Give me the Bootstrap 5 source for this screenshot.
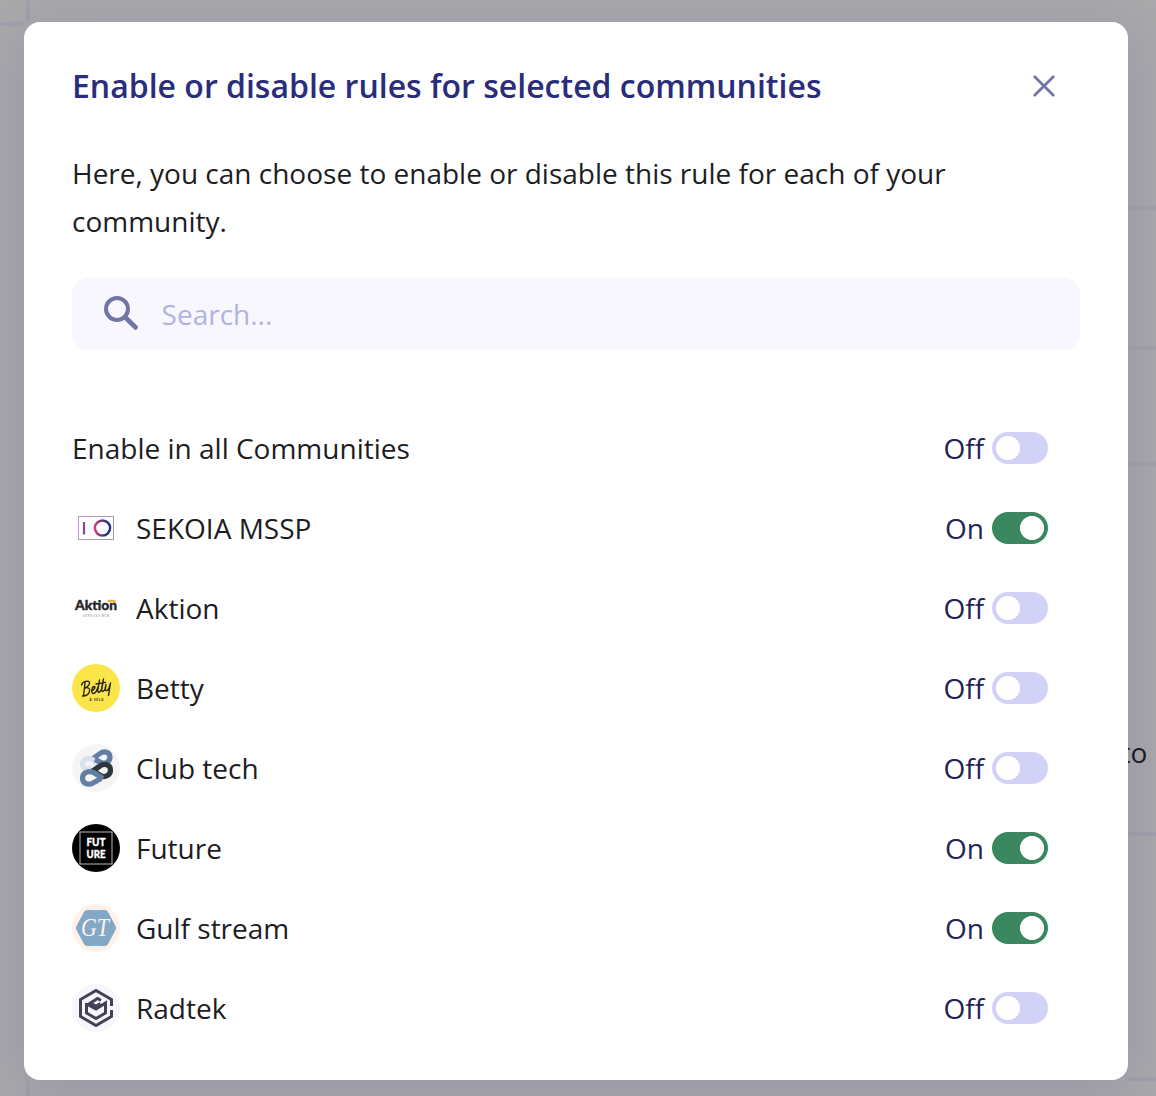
<!DOCTYPE html>
<html lang="en">
<head>
<meta charset="utf-8">
<meta name="viewport" content="width=device-width, initial-scale=1">
<title>Communities</title>
<link href="https://cdn.jsdelivr.net/npm/bootstrap@5.3.0/dist/css/bootstrap.min.css" rel="stylesheet">
<style>
body{font-family:"Open Sans","Noto Sans",sans-serif;font-size:28px;line-height:48px;color:#1d1d1f;background:#abaaab;height:1096px;overflow:hidden}
.backdrop-rules{inset:0;z-index:0}
.dialog-panel{width:1104px;height:1058px;margin:22px 0 0 24px;padding:40px 48px 32px;border-radius:16px;background:#fff;box-shadow:0 12px 70px 10px rgba(145,145,165,.75);z-index:1}
.dialog-title{font-size:32px;font-weight:600;line-height:48px;color:#2a2c7c}
.close-btn{width:24px;height:24px;margin-right:24px}
.intro{margin-top:39px}
.search-box{height:72px;border-radius:16px;background:#f7f7fd;margin-top:33px;padding-left:30px}
.search-box .form-control{font-size:28px;padding:0;margin-left:22px;color:#222259}
.search-box .form-control::placeholder{color:#b2b2e1;opacity:1}
.community-list{margin-top:58px}
.community{height:80px;padding-right:32px}
.avatar{width:48px;height:48px;margin-right:16px}
.state{color:#222259;margin-right:8px}
.toggle.form-check-input{width:56px;height:32px;margin:0;border:0;border-radius:16px;background:radial-gradient(circle at 16px 16px,#fff 11.6px,transparent 12.4px) #d2d1f6}
.toggle.form-check-input:checked{background:radial-gradient(circle at 40px 16px,#fff 11.6px,transparent 12.4px) #3b875f}
.page-edge{left:1128px;top:0;z-index:2;overflow:hidden}
</style>
<script src="https://cdn.jsdelivr.net/npm/bootstrap@5.3.0/dist/js/bootstrap.bundle.min.js"></script>
</head>
<body>
<main class="dialog-panel position-relative d-flex flex-column">
<header class="d-flex align-items-center justify-content-between">
<h1 class="dialog-title m-0">Enable or disable rules for selected communities</h1>
<button class="close-btn btn p-0 border-0 d-flex" aria-label="Close"><svg width="24" height="24" fill="none" stroke="#7375a6" stroke-width="2.8" stroke-linecap="round"><path d="M2.7 2.7 21.3 21.3M21.3 2.7 2.7 21.3"/></svg></button>
</header>
<p class="intro mb-0">Here, you can choose to enable or disable this rule for each of your community.</p>
<div class="search-box d-flex align-items-center flex-shrink-0">
<svg width="40" height="40" fill="none" stroke="#7375a6"><circle cx="15" cy="15" r="11" stroke-width="4"/><path d="m24.500 24.500 9.200 9" stroke-width="4.600" stroke-linecap="round"/></svg>
<input class="form-control border-0 bg-transparent shadow-none" placeholder="Search..." aria-label="Search">
</div>
<div class="community-list">
<div class="community d-flex align-items-center"><span class="me-auto">Enable in all Communities</span><span class="state">Off</span><input class="toggle form-check-input" type="checkbox" role="switch"></div>
<div class="community d-flex align-items-center">
<svg class="avatar" viewBox="0 0 48 48"><defs><linearGradient id="io"><stop stop-color="#d53b72"/><stop offset=".75" stop-color="#233284"/></linearGradient><linearGradient id="frame"><stop stop-color="#c29bcb"/><stop offset="1" stop-color="#9799bd"/></linearGradient></defs><rect x="6.500" y="12.500" width="35" height="23" fill="#fff" stroke="url(#frame)"/><path d="M12 18v12.500" stroke="#8c469c" stroke-width="2.200"/><circle cx="30.500" cy="24" r="7.600" fill="none" stroke="url(#io)" stroke-width="2.500"/></svg>
<span class="me-auto">SEKOIA MSSP</span><span class="state">On</span><input class="toggle form-check-input" type="checkbox" role="switch" checked></div>
<div class="community d-flex align-items-center">
<svg class="avatar" viewBox="0 0 48 48"><text x="3" y="26.300" font-family="Lato" font-size="14" font-weight="900" textLength="42" lengthAdjust="spacingAndGlyphs" fill="#242429" stroke="#242429" stroke-width=".35">Aktion</text><path d="M35.500 15.800h6q2.300 0 2.300 3.200h-2q-1-1-3-1h-3.300z" fill="#efb33c"/><text x="11" y="32.500" font-size="2.800" textLength="26" fill="#777">SERVICES WEB</text></svg>
<span class="me-auto">Aktion</span><span class="state">Off</span><input class="toggle form-check-input" type="checkbox" role="switch"></div>
<div class="community d-flex align-items-center">
<svg class="avatar" viewBox="0 0 48 48"><circle cx="24" cy="24" r="24" fill="#fae64b"/><g fill="none" stroke="#24231c" stroke-width="1.350" stroke-linecap="round" stroke-linejoin="round"><path d="M13 18.500 11.500 32M9.500 21c1-4 8-5 8-2 0 2-2.500 4-4.500 5 3-1 5.500.5 4.500 3.500-.8 3-4 4.500-7 4.500"/><path d="M19.500 26.500c3-.5 4.500-4 2.700-4-2.500 0-3.500 7-.7 7 2.500 0 3.800-4 4.700-7M27.500 16l-1.700 10.500c-.3 3 2.400 2 3.600-1L31.500 15l-1.800 11c0 2.500 2.500 1.500 3.300-1l1-4.500-.6 4.500c0 3 3 1.500 3.600-1l1.500-5-2 12.500M24 20l9.500-1.700"/></g><text x="17.500" y="37" font-size="3" font-weight="700" textLength="14" fill="#24231c">À VÉLO</text></svg>
<span class="me-auto">Betty</span><span class="state">Off</span><input class="toggle form-check-input" type="checkbox" role="switch"></div>
<div class="community d-flex align-items-center">
<svg class="avatar" viewBox="0 0 48 48"><circle cx="24" cy="24" r="24" fill="#f5f5f6"/><g fill="none" stroke-width="5.200" stroke-linejoin="round"><path d="M21 14.500 28 9.500c4-3 10-1.500 10 3.500s-5 7.500-9 5.500l-6-3" stroke="#617fa3"/><path d="m28 22-7-6c-4-3.500-10.500-1-10.500 4s5 6 9 3.500" stroke="#d8e1ef"/><path d="M23 15.500l6 3.200" stroke="#617fa3"/><path d="m20 27.500 8-5.500c4-3 10.500-1.500 10.500 4s-6 8-10 5.500l-7-4.500" stroke="#2d363e"/><path d="m31 34.500-8.500-5.500c-5-3-12-1-12 5s6 7.500 10.500 5l8-4.500" stroke="#617fa3"/></g></svg>
<span class="me-auto">Club tech</span><span class="state">Off</span><input class="toggle form-check-input" type="checkbox" role="switch"></div>
<div class="community d-flex align-items-center">
<svg class="avatar" viewBox="0 0 48 48"><circle cx="24" cy="24" r="24"/><rect x="8" y="8" width="32" height="32" fill="none" stroke="#b9b9b9"/><g fill="#fff" stroke="#fff" stroke-width=".3" font-family="Lato" font-size="10.500" font-weight="900"><text x="14.500" y="22" textLength="19" lengthAdjust="spacingAndGlyphs">FUT</text><text x="14.500" y="34" textLength="19" lengthAdjust="spacingAndGlyphs">URE</text></g></svg>
<span class="me-auto">Future</span><span class="state">On</span><input class="toggle form-check-input" type="checkbox" role="switch" checked></div>
<div class="community d-flex align-items-center">
<svg class="avatar" viewBox="0 0 48 48"><circle cx="24" cy="24" r="24" fill="#fdf1e9"/><path d="M15 6h18q2 0 3 2l7 13q2 3 0 6l-7 13q-1 2-3 2H15q-2 0-3-2L5 27q-2-3 0-6l7-13q1-2 3-2z" fill="#83a7c6"/><text x="9" y="32" font-family="Liberation Serif" font-style="italic" font-size="25" textLength="28" lengthAdjust="spacingAndGlyphs" fill="#fdf3ec">GT</text></svg>
<span class="me-auto">Gulf stream</span><span class="state">On</span><input class="toggle form-check-input" type="checkbox" role="switch" checked></div>
<div class="community d-flex align-items-center">
<svg class="avatar" viewBox="0 0 48 48"><circle cx="24" cy="24" r="24" fill="#f6f6fd"/><g fill="none" stroke="#464057" stroke-width="3"><path d="M39.500 22v-6.500L24 6.500 8.500 15.500v17L24 41.500l15.500-9V26"/><path d="M28.500 19.500 24 22.300l-5.500-3.300 7-4.500 3.500 1.800M14.500 19v10L24 34.500l9.500-5.500V19L24 25l-9.500-5"/></g></svg>
<span class="me-auto">Radtek</span><span class="state">Off</span><input class="toggle form-check-input" type="checkbox" role="switch"></div>
</div>
</main>
<svg class="backdrop-rules position-absolute pe-none" width="1156" height="1096" aria-hidden="true" fill="none" stroke="#9c9daa" stroke-opacity=".75" stroke-width="4"><path d="M0 24h24M28 0v22M28 1080v16M1128 208h28M1128 348h28M1128 464h28M1128 834h28M1128 1079h28"/></svg>
<svg class="page-edge position-absolute pe-none" width="28" height="1096" aria-hidden="true"><text x="-7.500" y="763" font-size="28" fill="#1b1b20">to</text></svg>
</body>
</html>
